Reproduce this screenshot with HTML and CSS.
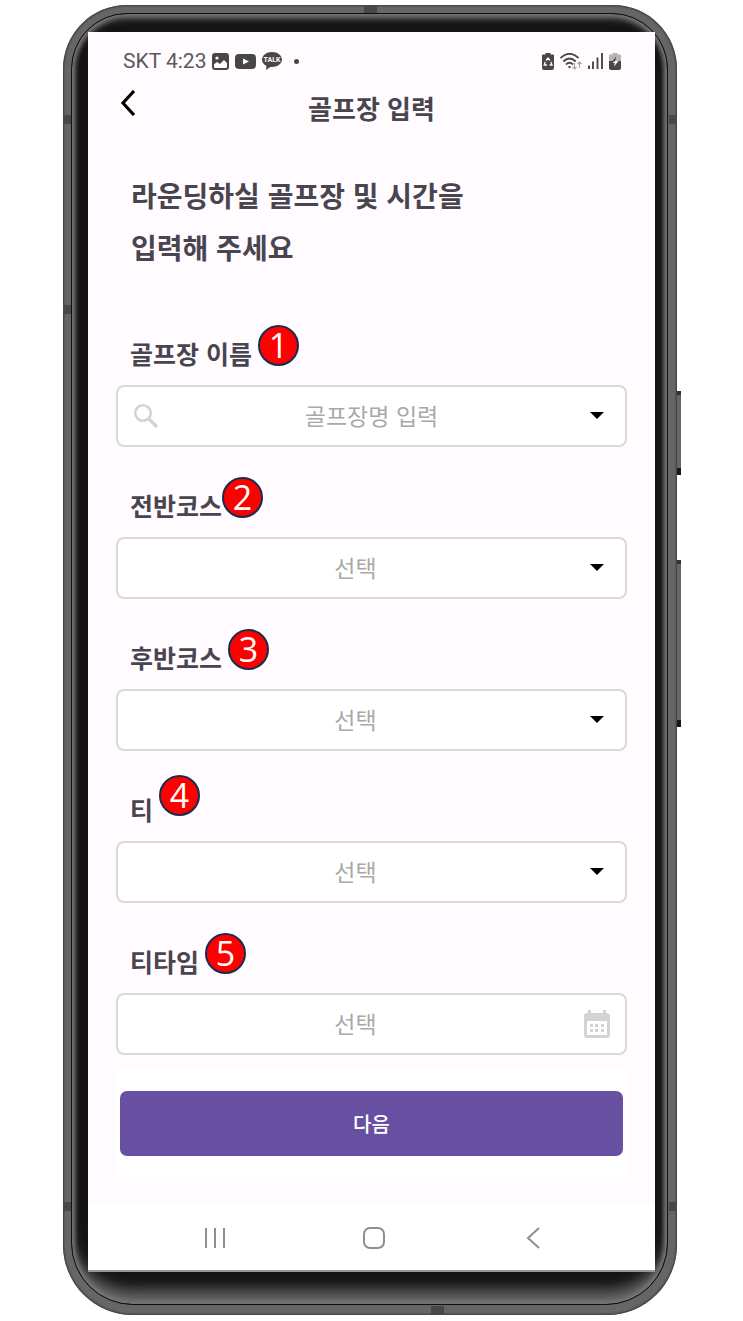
FILE: index.html
```html
<!DOCTYPE html>
<html lang="ko">
  <head>
    <meta charset="UTF-8" />
    <meta name="viewport" content="width=device-width, initial-scale=1.0" />
    <title>골프장 입력</title>
    <link rel="stylesheet" href="styles.css">
  </head>
  <body>
    <div class="phone">
      <span class="side-button volume"></span>
      <span class="side-button power"></span>
      <span class="band band-top"></span>
      <span class="band band-bottom"></span>
      <span class="band band-left high"></span>
      <span class="band band-left middle"></span>
      <span class="band band-left low"></span>
      <span class="band band-right high"></span>
      <span class="band band-right low"></span>

      <div class="bezel">
        <div class="screen">
          <div class="status-bar">
            <span>SKT 4:23</span>
            <svg width="17" height="17" viewBox="0 0 17 17">
              <rect x="1" y="1" width="15" height="15" rx="2" fill="none" stroke="#474747" stroke-width="2" />
              <path d="M1 1h15v10l-4-4-4 4-3-2-4 3z" fill="#474747" />
              <circle cx="5" cy="5" r="1.6" fill="#fffbff" />
            </svg>
            <svg width="21" height="15" viewBox="0 0 21 15">
              <rect width="21" height="15" rx="4" fill="#474747" />
              <path d="M8 4.500l6 3-6 3z" fill="#fffbff" />
            </svg>
            <svg width="20" height="18" viewBox="0 0 20 18">
              <path d="M10 0C4.500 0 0 3.400 0 7.600c0 2.700 1.800 5 4.500 6.300L4 18l4.300-3 1.700.1c5.500 0 10-3.300 10-7.500S15.500 0 10 0z" fill="#474747" />
              <text x="10" y="10" text-anchor="middle" class="talk">TALK</text>
            </svg>
            <span class="more-dot"></span>

            <div class="status-right">
              <svg width="12" height="17" viewBox="0 0 12 17">
                <path d="M3.500 0h5v1.500H11q1 0 1 1V15q0 2-2 2H2q-2 0-2-2V2.500q0-1 1-1h2.500z" fill="#474747" />
                <path d="M4 7.500L6 5l2 2.500M9 9l1 3H7.500M5 12H2.200L3.200 9" fill="none" stroke="#fffbff" stroke-width="1.300" />
              </svg>
              <svg width="22" height="17" viewBox="0 0 22 17">
                <g fill="none" stroke="#474747" stroke-width="1.800">
                  <path d="M.5 5q9-8.500 18 0" />
                  <path d="M3.300 8.500q6.200-6 12.400 0" />
                  <path d="M6 11.500q3.500-3.500 7 0" />
                </g>
                <circle cx="9.500" cy="14" r="1.200" fill="#474747" />
                <path d="M14.500 10v6M12.500 14l2 2 2-2M19.500 15V9M17.500 11l2-2 2 2" fill="none" stroke="#a5a5a5" stroke-width="1.200" />
              </svg>
              <svg width="15" height="16" viewBox="0 0 15 16">
                <path d="M1 12.500V16M5 8.500V16M9.500 4.500V16M14 0V16" fill="none" stroke="#474747" stroke-width="1.900" />
              </svg>
              <svg width="12" height="17" viewBox="0 0 12 17">
                <path d="M3.500 0h5v1.500H11q1 0 1 1V9H0V2.500q0-1 1-1h2.500z" fill="#b5b5b5" />
                <path d="M0 8h12v7q0 2-2 2H2q-2 0-2-2z" fill="#474747" />
                <path d="M7 3.500L3 9h3z" fill="#474747" />
                <path d="M6 8h3.500L5 13.500l.8-3.500H3.500z" fill="#fffbff" />
              </svg>
            </div>
          </div>

          <header class="app-bar">
            <button type="button" class="back" aria-label="뒤로">
              <svg width="16" height="26" viewBox="0 0 16 26">
                <path d="M14 1L3 13l11 12" fill="none" stroke="#000" stroke-width="3.200" />
              </svg>
            </button>
            <h1>골프장 입력</h1>
          </header>

          <main>
            <h2>라운딩하실 골프장 및 시간을<br>입력해 주세요</h2>

            <form>
              <div class="field">
                <label for="club">골프장 이름<span class="badge">1</span></label>
                <div class="control has-search">
                  <svg class="search-icon" width="26" height="26" viewBox="0 0 26 26">
                    <circle cx="10" cy="10" r="7.800" fill="none" stroke="#d3d3d3" stroke-width="2.600" />
                    <path d="M15.500 15.500L24 24" stroke="#d3d3d3" stroke-width="3.200" />
                  </svg>
                  <select id="club"><option>골프장명 입력</option></select>
                  <svg class="arrow" width="14" height="8" viewBox="0 0 14 8"><path d="M0 0h14L7 7z" /></svg>
                </div>
              </div>

              <div class="field">
                <label for="front">전반코스<span class="badge close">2</span></label>
                <div class="control">
                  <select id="front"><option>선택</option></select>
                  <svg class="arrow" width="14" height="8" viewBox="0 0 14 8"><path d="M0 0h14L7 7z" /></svg>
                </div>
              </div>

              <div class="field">
                <label for="back">후반코스<span class="badge">3</span></label>
                <div class="control">
                  <select id="back"><option>선택</option></select>
                  <svg class="arrow" width="14" height="8" viewBox="0 0 14 8"><path d="M0 0h14L7 7z" /></svg>
                </div>
              </div>

              <div class="field">
                <label for="tee">티<span class="badge raised">4</span></label>
                <div class="control">
                  <select id="tee"><option>선택</option></select>
                  <svg class="arrow" width="14" height="8" viewBox="0 0 14 8"><path d="M0 0h14L7 7z" /></svg>
                </div>
              </div>

              <div class="field">
                <label for="tee-time">티타임<span class="badge">5</span></label>
                <div class="control">
                  <input type="text" id="tee-time" placeholder="선택" />
                  <svg class="calendar-icon" width="26" height="28" viewBox="0 0 26 28">
                    <path d="M4 0h3v3h12V0h3v3q4 0 4 3v19q0 3-3 3H3q-3 0-3-3V6q0-3 4-3z" fill="#d3d3d3" />
                    <path d="M3 11h20v14H3z" fill="#fff" />
                    <path d="M6 14h3v3H6zM11 14h3v3h-3zM17 14h3v3h-3zM6 19h3v3H6zM11 19h3v3h-3zM17 19h3v3h-3z" fill="#d3d3d3" />
                  </svg>
                </div>
              </div>

              <div class="submit">
                <button type="button" class="next">다음</button>
              </div>
            </form>
          </main>

          <nav class="nav-bar">
            <button type="button" aria-label="최근 앱">
              <svg width="22" height="22" viewBox="0 0 22 22">
                <path d="M2 1v20M11 1v20M20 1v20" />
              </svg>
            </button>
            <button type="button" aria-label="홈">
              <svg width="22" height="22" viewBox="0 0 22 22">
                <rect x="1" y="1" width="20" height="20" rx="6" />
              </svg>
            </button>
            <button type="button" aria-label="이전">
              <svg width="22" height="22" viewBox="0 0 22 22">
                <path d="M17 1L6 11l11 10" />
              </svg>
            </button>
          </nav>
        </div>
      </div>
    </div>
  </body>
</html>
```

FILE: styles.css
```css
* {
  box-sizing: border-box;
}
body {
  margin: 0;
  padding: 5px 66px 6px 63px;
  background: #fff;
  color: #49454f;
  font-family: "Noto Sans CJK KR", sans-serif;
}

/* phone body */
.phone {
  position: relative;
  padding: 8px 9px 10px 8px;
  border-radius: 64px 64px 70px 70px;
  background: #666;
  box-shadow: inset 0 0 2px 1px #3a3a3a;
}
.bezel {
  padding: 18px 12px 32px 16px;
  border: 1px solid #111;
  border-radius: 56px 56px 62px 62px;
  background: #141414;
  box-shadow: inset 0 0 4px 3px #777, inset 0 6px 6px #444,
    inset 0 -18px 14px -4px #666;
}
.side-button {
  position: absolute;
  right: -4px;
  width: 4px;
  background: #666;
  border-top: 4px solid #333;
  border-bottom: 7px solid #181818;
}
.volume {
  top: 386px;
  height: 84px;
}
.power {
  top: 555px;
  height: 167px;
}
.band {
  position: absolute;
  background: #484848;
}
.band-top,
.band-bottom {
  width: 13px;
  height: 8px;
}
.band-top {
  top: 0;
  left: 49%;
}
.band-bottom {
  bottom: 1px;
  left: 60%;
}
.band-left,
.band-right {
  width: 8px;
  height: 9px;
}
.band-left {
  left: 0;
}
.band-right {
  right: 0;
}
.high {
  top: 110px;
}
.middle {
  top: 300px;
}
.low {
  bottom: 104px;
}

.screen {
  background: #fffbff;
  border-bottom: 2px solid #999;
}
.status-bar {
  display: flex;
  align-items: center;
  gap: 6px;
  height: 58px;
  padding: 0 34px 0 35px;
  color: #5a5a5a;
  font-family: Roboto, sans-serif;
  font-size: 21px;
}
.talk {
  fill: #fffbff;
  font-size: 7px;
  font-weight: bold;
}
.more-dot {
  width: 5px;
  height: 5px;
  margin-left: 6px;
  border-radius: 50%;
  background: #474747;
}
.status-right {
  display: flex;
  align-items: center;
  gap: 6px;
  margin-left: auto;
}

.app-bar {
  display: grid;
  grid-template-columns: 52px 1fr 52px;
  height: 79px;
}
.app-bar h1 {
  margin: 0;
  font-size: 26px;
  line-height: 36px;
  text-align: center;
}
button {
  padding: 0;
  border: none;
  background: none;
  cursor: pointer;
}
.back {
  height: 26px;
  padding-left: 32px;
}
svg {
  display: block;
}

main {
  padding: 0 28px 27px;
}
h2 {
  margin: 0 15px 63px;
  font-size: 28px;
  line-height: 52px;
}
.field {
  margin-bottom: 41px;
}
label {
  position: relative;
  display: table;
  margin: 0 14px 15px;
  font-size: 25px;
  font-weight: bold;
  line-height: 34px;
}
.badge {
  position: absolute;
  top: -11px;
  left: calc(100% + 6px);
  width: 41px;
  height: 41px;
  border: 2px solid #172c51;
  border-radius: 50%;
  background: #f00;
  color: #fff;
  font-family: "Open Sans", sans-serif;
  font-size: 34px;
  font-weight: 400;
  line-height: 36px;
  text-align: center;
}
.badge.close {
  left: 100%;
}
.badge.raised {
  top: -17px;
}
.control {
  display: flex;
  align-items: center;
  position: relative;
}
.control select,
.control input {
  appearance: none;
  width: 100%;
  height: 62px;
  padding: 0 48px 2px 16px;
  border: 2px solid #dadada;
  border-radius: 8px;
  background: #fff;
  color: #a9a9a9;
  font-family: inherit;
  font-size: 23px;
  text-align: center;
  text-align-last: center;
}
.control input::placeholder {
  color: #a9a9a9;
}
.control.has-search select {
  padding-left: 48px;
}
.control svg {
  position: absolute;
  pointer-events: none;
}
.search-icon {
  left: 17px;
}
.arrow {
  right: 23px;
}
.calendar-icon {
  right: 17px;
}
.submit {
  margin-top: -27px;
  padding: 22px 4px;
  background: #fff;
}
.next {
  display: block;
  width: 100%;
  height: 65px;
  border-radius: 7px;
  background: #6750a2;
  color: #fff;
  font-family: inherit;
  font-size: 20px;
  font-weight: 500;
}

.nav-bar {
  display: flex;
  height: 65px;
  padding: 0 43px 0 47px;
  background: #fff;
}
.nav-bar button {
  flex: 1;
}
.nav-bar svg {
  margin: 0 auto;
  fill: none;
  stroke: #8f8f8f;
  stroke-width: 2;
}
```
